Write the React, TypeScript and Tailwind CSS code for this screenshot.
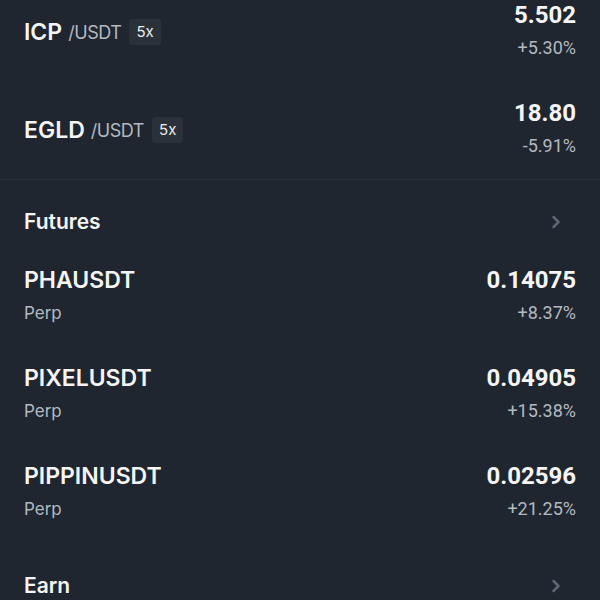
import { ChevronRight } from "lucide-react";

type SpotRow = { base: string; quote: string; lev: string; price: string; change: string };
type FutRow = { symbol: string; price: string; change: string };

const spot: SpotRow[] = [
  { base: "ICP", quote: "/USDT", lev: "5x", price: "5.502", change: "+5.30%" },
  { base: "EGLD", quote: "/USDT", lev: "5x", price: "18.80", change: "-5.91%" },
];

const futures: FutRow[] = [
  { symbol: "PHAUSDT", price: "0.14075", change: "+8.37%" },
  { symbol: "PIXELUSDT", price: "0.04905", change: "+15.38%" },
  { symbol: "PIPPINUSDT", price: "0.02596", change: "+21.25%" },
];

const Price = ({ price, change }: { price: string; change: string }) => (
  <div className="flex flex-col items-end">
    <span className="font-['Roboto',sans-serif] font-bold text-[24px] leading-[32px] text-[#f5f5f5]">
      {price}
    </span>
    <span className="font-['Roboto',sans-serif] text-[18px] leading-[34px] text-[#b3b9c1]">
      {change}
    </span>
  </div>
);

const SectionHeader = ({ title, top }: { title: string; top: string }) => (
  <div className={`flex items-center justify-between px-6 ${top}`}>
    <h2 className="text-[21px] leading-[28px] font-semibold text-[#f5f5f5]">{title}</h2>
    <ChevronRight className="w-5 h-5 mr-[10px] text-[#5e6673]" strokeWidth={3} />
  </div>
);

export default function App() {
  return (
    <div className="w-[600px] h-[600px] overflow-hidden bg-[#1f2630] font-['Inter',sans-serif]">
      <div className="-mt-[17px]">
        {spot.map((r) => (
          <div key={r.base} className="flex items-center justify-between px-6 py-4">
            <div className="flex items-center">
              <span className="text-[23px] font-semibold text-[#f5f5f5]">{r.base}</span>
              <span className="ml-1.5 text-[18px] text-[#b3b9c1] tracking-tight">{r.quote}</span>
              <span className="ml-2 h-[26px] px-[7px] flex items-center rounded-sm bg-[#2b3139] text-[15px] text-[#eaecef]">
                {r.lev}
              </span>
            </div>
            <Price price={r.price} change={r.change} />
          </div>
        ))}
      </div>

      <div className="border-t border-[#2b3139]">
        <SectionHeader title="Futures" top="pt-[28px] pb-[12px]" />
        {futures.map((r) => (
          <div key={r.symbol} className="flex items-center justify-between px-6 py-4">
            <div className="flex flex-col">
              <span className="text-[23px] leading-[32px] font-semibold text-[#f5f5f5]">{r.symbol}</span>
              <span className="text-[17px] leading-[34px] text-[#b3b9c1]">Perp</span>
            </div>
            <Price price={r.price} change={r.change} />
          </div>
        ))}
        <SectionHeader title="Earn" top="pt-[30px]" />
      </div>
    </div>
  );
}
